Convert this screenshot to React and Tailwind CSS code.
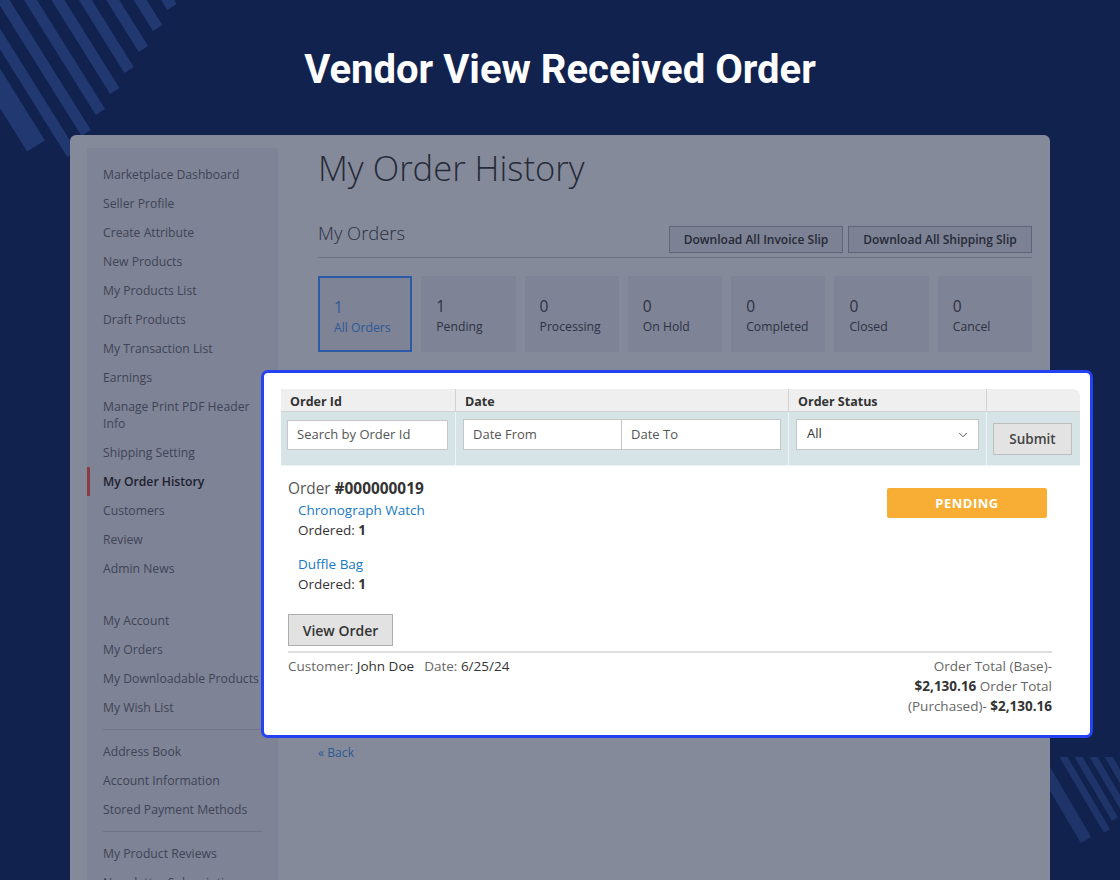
import { ChevronDown } from 'lucide-react'

const MENU_TOP = [
  'Marketplace Dashboard',
  'Seller Profile',
  'Create Attribute',
  'New Products',
  'My Products List',
  'Draft Products',
  'My Transaction List',
  'Earnings',
  'Manage Print PDF Header|Info',
  'Shipping Setting',
  'My Order History',
  'Customers',
  'Review',
  'Admin News',
]

const MENU_ACCOUNT = [
  ['My Account', 'My Orders', 'My Downloadable Products', 'My Wish List'],
  ['Address Book', 'Account Information', 'Stored Payment Methods'],
  ['My Product Reviews', 'Newsletter Subscriptions'],
]

const TABS = [
  { count: 1, label: 'All Orders', active: true },
  { count: 1, label: 'Pending' },
  { count: 0, label: 'Processing' },
  { count: 0, label: 'On Hold' },
  { count: 0, label: 'Completed' },
  { count: 0, label: 'Closed' },
  { count: 0, label: 'Cancel' },
]

function TopStripes() {
  // stripe ends run along a diagonal, each stripe heads up-left out of the frame
  const lines = []
  for (let i = 0; i < 8; i++) {
    const ex = 172 - 14.3 * i
    const ey = 7 + 21 * i
    lines.push(
      <line key={i} x1={ex} y1={ey} x2={ex - 0.53 * 260} y2={ey - 0.848 * 260} stroke="#213870" strokeWidth="11" />
    )
  }
  return (
    <svg className="absolute left-0 top-0" width="200" height="170" viewBox="0 0 200 170">
      {lines}
      <line x1="36" y1="146" x2={36 - 0.53 * 200} y2={146 - 0.848 * 200} stroke="#213870" strokeWidth="21" />
    </svg>
  )
}

function BottomStripes() {
  const ends = [
    [67, 74],
    [75, 62],
    [83, 50],
    [91, 38],
  ]
  return (
    <svg className="absolute left-[1040px] top-[757px]" width="80" height="100" viewBox="0 0 80 100">
      <line x1="46" y1="83" x2={46 - 60} y2={83 - 102} stroke="#1f3569" strokeWidth="12" />
      {ends.map(([x, y], i) => (
        <line key={i} x1={x} y1={y} x2={x - 60} y2={y - 102} stroke="#1f3569" strokeWidth="7" />
      ))}
    </svg>
  )
}

function MenuItem({ label }) {
  const active = label === 'My Order History'
  const parts = label.split('|')
  return (
    <div
      className={
        active
          ? 'whitespace-nowrap border-l-[3px] border-[#8a3c42] py-[5.5px] pl-[13px] text-[12.2px] font-semibold leading-[18px] text-[#1d2131]'
          : parts[1]
            ? 'whitespace-nowrap py-[5.5px] pl-[16px] text-[12.2px] leading-[17.5px] text-[#3e4357]'
            : 'whitespace-nowrap py-[5.5px] pl-[16px] text-[12.2px] leading-[18px] text-[#3e4357]'
      }
    >
      {parts[0]}
      {parts[1] && (
        <>
          <br />
          {parts[1]}
        </>
      )}
    </div>
  )
}

function Sidebar() {
  return (
    <div className="w-[191px] shrink-0 bg-[#7e8395] pt-[12px]">
      {MENU_TOP.map((label) => (
        <MenuItem key={label} label={label} />
      ))}
      <div className="mt-[23px]">
        {MENU_ACCOUNT.map((group, gi) => (
          <div key={gi}>
            {gi > 0 && <div className="my-[7px] ml-[16px] mr-[15px] h-px bg-[#6f7487]" />}
            {group.map((label) => (
              <MenuItem key={label} label={label} />
            ))}
          </div>
        ))}
      </div>
    </div>
  )
}

function MainContent() {
  return (
    <div className="ml-[40px] flex-1">
      <h1 className="text-[34.6px] font-light leading-[40px] text-[#262a38]">My Order History</h1>

      <div className="mt-[33px] flex items-start justify-between">
        <h2 className="text-[18.4px] font-light leading-[24px] text-[#2b2f3e]">My Orders</h2>
        <div className="mt-[5px] flex gap-[5px]">
          <button className="h-[27px] w-[174px] border border-[#5f6478] bg-[#7c8193] text-[12px] font-semibold text-[#262a38]">
            Download All Invoice Slip
          </button>
          <button className="h-[27px] w-[184px] border border-[#5f6478] bg-[#7c8193] text-[12px] font-semibold text-[#262a38]">
            Download All Shipping Slip
          </button>
        </div>
      </div>
      <div className="mt-[4px] h-px bg-[#6c7184]" />

      <div className="mt-[18px] grid grid-cols-7 gap-[9px]">
        {TABS.map((tab) => (
          <div
            key={tab.label}
            className={
              tab.active
                ? 'h-[76px] border-2 border-[#2d5aa6] bg-[#7e8395] pl-[14px] pt-[19px] text-[#2c5898]'
                : 'h-[76px] bg-[#7e8395] pl-[15px] pt-[20px] text-[#2d3244]'
            }
          >
            <div className="text-[15.5px] leading-[20px]">{tab.count}</div>
            <div className="mt-[2px] text-[12.2px] leading-[18px]">{tab.label}</div>
          </div>
        ))}
      </div>

      <a className="mt-[392px] block text-[12.2px] leading-[18px] text-[#2c5a92]">« Back</a>
    </div>
  )
}

function OrderCard() {
  return (
    <div className="absolute left-[261px] top-[370px] h-[368px] w-[832px] rounded-[7px] border-[3px] border-[#2442f2] bg-white pl-[17px] pr-[10px] pt-[16px] font-['Open_Sans',sans-serif]">
      {/* filter table */}
      <div className="grid grid-cols-[175px_333px_198px_93px] overflow-hidden rounded-tr-[7px]">
        <div className="h-[23px] border-b border-r border-[#d2d2d2] bg-[#efefef] pl-[9px] text-[12.5px] font-bold leading-[25px] text-[#333]">Order Id</div>
        <div className="h-[23px] border-b border-r border-[#d2d2d2] bg-[#efefef] pl-[9px] text-[12.5px] font-bold leading-[25px] text-[#333]">Date</div>
        <div className="h-[23px] border-b border-r border-[#d2d2d2] bg-[#efefef] pl-[9px] text-[12.5px] font-bold leading-[25px] text-[#333]">Order Status</div>
        <div className="h-[23px] border-b border-[#d2d2d2] bg-[#efefef]" />

        <div className="h-[54px] border-b border-r border-[#eef3f4] bg-[#d6e4e8] pl-[6px] pt-[8px]">
          <div className="flex h-[30px] w-[161px] items-center border border-[#c6c6c6] bg-white pl-[9px] text-[13px] text-[#555]">Search by Order Id</div>
        </div>
        <div className="flex h-[54px] border-b border-r border-[#eef3f4] bg-[#d6e4e8] pl-[7px] pt-[7px]">
          <div className="flex h-[31px] w-[159px] items-center border border-[#c6c6c6] bg-white pl-[9px] text-[13px] text-[#555]">Date From</div>
          <div className="flex h-[31px] w-[159px] items-center border border-l-0 border-[#c6c6c6] bg-white pl-[9px] text-[13px] text-[#555]">Date To</div>
        </div>
        <div className="h-[54px] border-b border-r border-[#eef3f4] bg-[#d6e4e8] pl-[7px] pt-[7px]">
          <div className="flex h-[31px] w-[183px] items-center justify-between border border-[#c6c6c6] bg-white pl-[10px] pr-[8px] text-[13px] text-[#333]">
            <span className="-mt-[2px]">All</span>
            <ChevronDown size={14} strokeWidth={1.5} className="text-[#444]" />
          </div>
        </div>
        <div className="h-[54px] border-b border-[#eef3f4] bg-[#d6e4e8] pl-[6px] pt-[11px]">
          <button className="h-[32px] w-[79px] border border-[#bdbdbd] bg-[#e3e3e3] text-[13.5px] font-semibold text-[#444]">Submit</button>
        </div>
      </div>

      {/* order */}
      <div className="pl-[7px] pr-[28px] pt-[12px]">
        <div className="flex justify-between">
          <div>
            <div className="text-[15.4px] leading-[22px] text-[#575757]">
              Order <span className="font-bold text-[#333]">#000000019</span>
            </div>
            <div className="pl-[10px] text-[13.5px] leading-[20px]">
              <div className="text-[#1979c3]">Chronograph Watch</div>
              <div className="text-[#333]">
                Ordered: <span className="font-bold">1</span>
              </div>
              <div className="mt-[14px] text-[#1979c3]">Duffle Bag</div>
              <div className="text-[#333]">
                Ordered: <span className="font-bold">1</span>
              </div>
            </div>
          </div>
          <div className="mr-[5px] mt-[10px] flex h-[30px] w-[160px] items-center justify-center rounded-[2px] bg-[#f8ae34] pt-px text-[13px] font-bold tracking-[0.5px] text-white">
            PENDING
          </div>
        </div>

        <button className="mt-[20px] h-[32px] w-[105px] border border-[#adadad] bg-[#e2e2e2] text-[14px] font-semibold text-[#333]">
          View Order
        </button>
        <div className="mt-[5px] h-[2px] bg-[#dedede]" />

        <div className="mt-[3px] flex justify-between text-[13.5px] leading-[20px] text-[#666]">
          <div>
            Customer: <span className="text-[#333]">John Doe</span>
            <span className="ml-[10px]">Date: </span>
            <span className="text-[#333]">6/25/24</span>
          </div>
          <div className="text-right">
            <div>Order Total (Base)-</div>
            <div>
              <span className="font-bold text-[#333]">$2,130.16</span> Order Total
            </div>
            <div>
              (Purchased)- <span className="font-bold text-[#333]">$2,130.16</span>
            </div>
          </div>
        </div>
      </div>
    </div>
  )
}

export default function App() {
  return (
    <div className="relative h-[880px] w-[1120px] overflow-hidden bg-[#12224f] font-['Open_Sans',sans-serif]">
      <TopStripes />
      <BottomStripes />

      <h1 className="relative pt-[47px] text-center font-['Roboto',sans-serif] text-[40px] font-bold leading-[46px] text-white">
        Vendor View Received Order
      </h1>

      {/* dimmed storefront screenshot */}
      <div className="relative mx-[70px] mt-[42px] flex h-[800px] rounded-t-[6px] bg-[#858a9b] pl-[17px] pr-[18px] pt-[13px]">
        <Sidebar />
        <MainContent />
      </div>

      <OrderCard />
    </div>
  )
}
